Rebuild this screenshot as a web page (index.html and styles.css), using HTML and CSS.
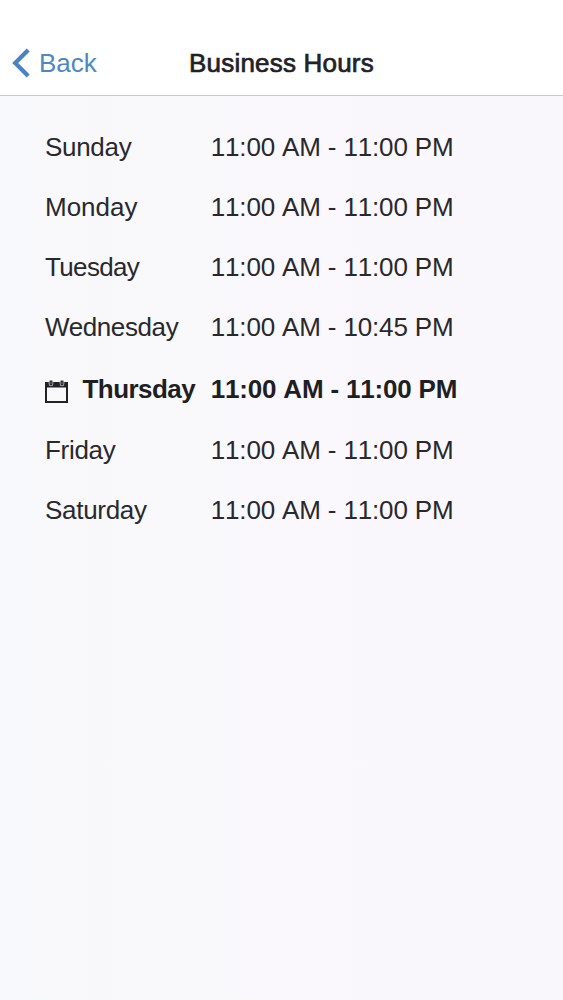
FILE: index.html
```html
<!DOCTYPE html>
<html lang="en">
<head>
<meta charset="utf-8">
<title>Business Hours</title>
<link rel="stylesheet" href="styles.css">
</head>
<body>
<header class="navbar">
  <a class="back">
    <svg class="chevron" width="19" height="30" viewBox="0 0 19 30"><path d="M17.200 2 L4.200 15 L17.200 28" fill="none" stroke="#4a83c4" stroke-width="4.200"/></svg>
    <span class="back-label">Back</span>
  </a>
  <h1 class="title">Business Hours</h1>
</header>
<main class="hours">
  <div class="row"><span class="day sun">Sunday</span><span class="time">11:00 AM - 11:00 PM</span></div>
  <div class="row"><span class="day mon">Monday</span><span class="time">11:00 AM - 11:00 PM</span></div>
  <div class="row"><span class="day tue">Tuesday</span><span class="time">11:00 AM - 11:00 PM</span></div>
  <div class="row"><span class="day wed">Wednesday</span><span class="time">11:00 AM - 10:45 PM</span></div>
  <div class="row today">
    <span class="day">
      <svg class="calendar" width="23" height="23" viewBox="0 0 23 23">
        <path d="M0 2H23V23H0ZM2 7.500V21H21V7.500Z" fill="#222126" fill-rule="evenodd"/>
        <path d="M6 2V4M17 2V4" stroke="#c9c8cc" stroke-width="4.600" stroke-linecap="round"/>
        <path d="M6 2V4M17 2V4" stroke="#222126" stroke-width="3" stroke-linecap="round"/>
        <path d="M6 2V3.800M17 2V3.800" stroke="#77767b" stroke-width="1" stroke-linecap="round"/>
      </svg>
      <span class="today-label">Thursday</span>
    </span>
    <span class="time">11:00 AM - 11:00 PM</span>
  </div>
  <div class="row"><span class="day fri">Friday</span><span class="time">11:00 AM - 11:00 PM</span></div>
  <div class="row"><span class="day sat">Saturday</span><span class="time">11:00 AM - 11:00 PM</span></div>
</main>
</body>
</html>
```
FILE: styles.css
```css
* { box-sizing: border-box; }
body {
  margin: 0;
  min-height: 1000px;
  background: linear-gradient(90deg, #f8f9fc 0, #f9f8fb 35%, #f9f7fb 100%);
  color: #29282d;
  font: 26px/30px "Liberation Sans", Arial, sans-serif;
}
.navbar {
  display: grid;
  grid-template-columns: 189px 1fr;
  align-items: center;
  height: 96px;
  padding-top: 31px;
  background: #fff;
  border-bottom: 1px solid #c9c8cc;
}
.back {
  display: flex;
  align-items: center;
  gap: 9px;
  padding-left: 11px;
  color: #4f87c5;
}
.chevron { display: block; }
.title {
  margin: 0;
  font-size: 26px;
  font-weight: 400;
  letter-spacing: 0.2px;
  color: #222126;
  -webkit-text-stroke: 0.7px #222126;
}
.hours { padding: 21px 0 0 45px; }
.row {
  display: grid;
  grid-template-columns: 165.7px 1fr;
  align-items: center;
  height: 60px;
}
.day, .time { white-space: nowrap; }
.time { font-kerning: none; letter-spacing: -0.15px; }
.sun, .fri, .sat { letter-spacing: -0.3px; }
.tue { letter-spacing: -0.65px; }
.wed { letter-spacing: -0.4px; }
.today {
  height: 63px;
  font-weight: 700;
  color: #1f1e23;
}
.today .day {
  display: flex;
  align-items: center;
  gap: 14.5px;
}
.today-label { letter-spacing: -0.55px; }
.today .time { letter-spacing: -0.18px; }
.calendar { display: block; margin-top: 5px; }
```
